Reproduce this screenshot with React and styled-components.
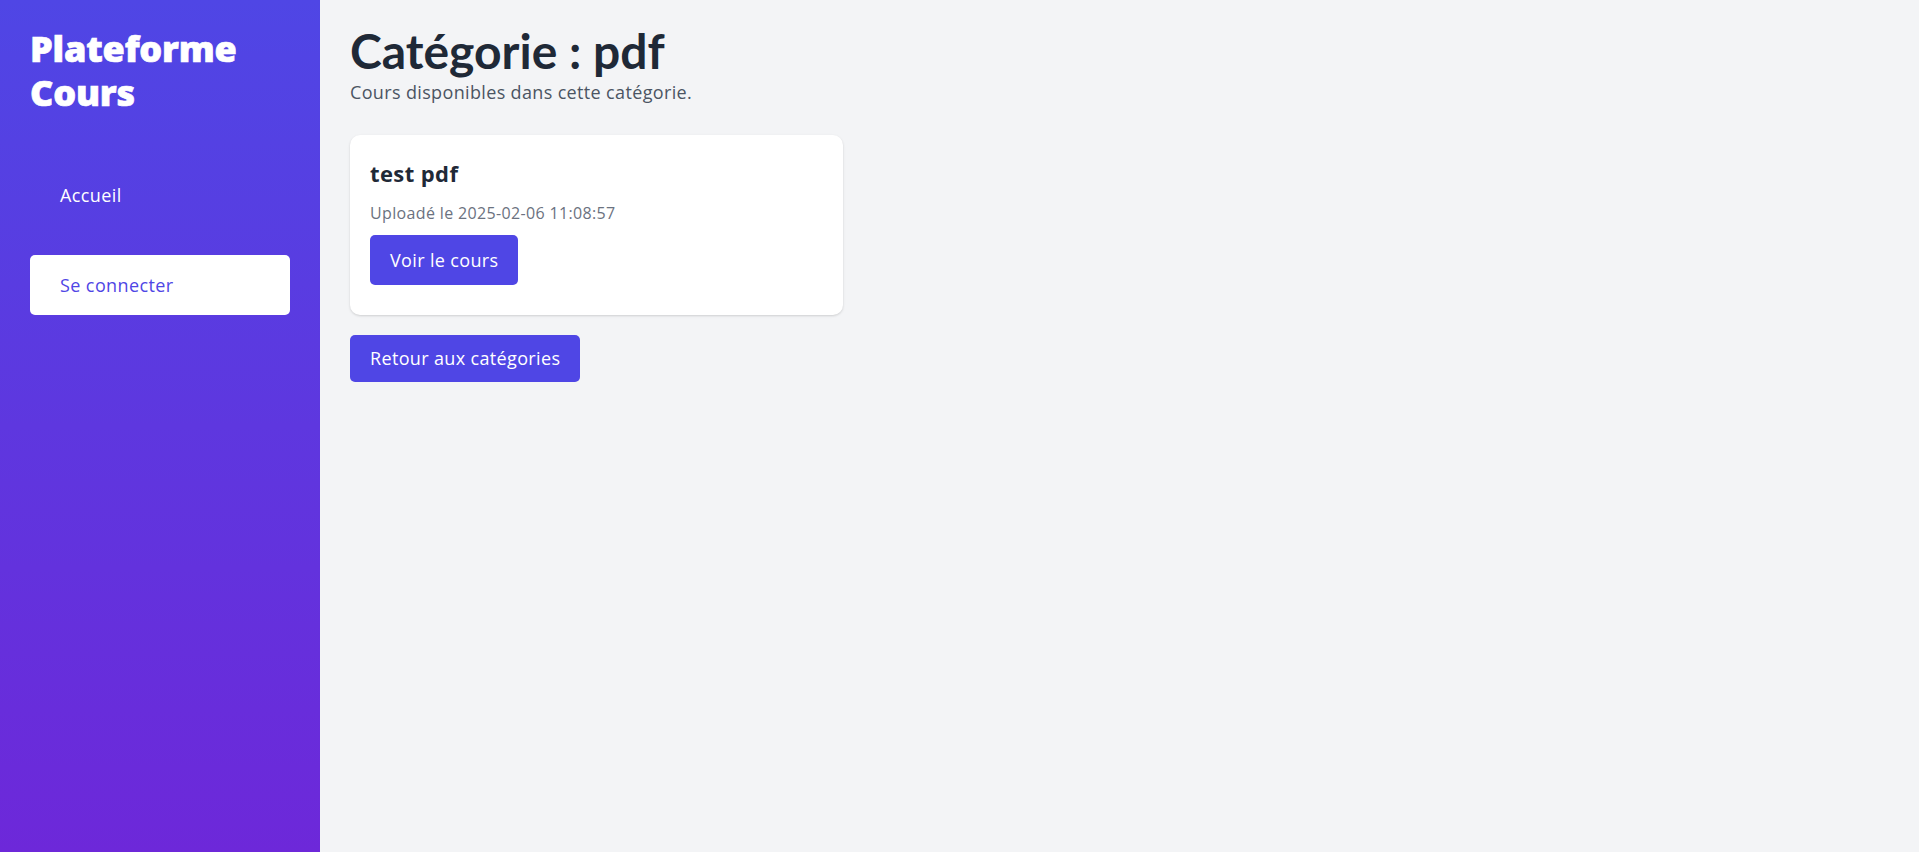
import React from "react";
import styled, { createGlobalStyle } from "styled-components";

const GlobalStyle = createGlobalStyle`
  * { box-sizing: border-box; }
  html, body { margin: 0; padding: 0; }
  body {
    font-family: "Open Sans", "Noto Sans", "Liberation Sans", sans-serif;
    background: #f3f4f6;
    color: #1f2937;
  }
`;

const Layout = styled.div`
  display: flex;
  min-height: 100vh;
`;

const Sidebar = styled.aside`
  width: 320px;
  flex-shrink: 0;
  padding: 27px 30px 30px;
  background: linear-gradient(180deg, #4f46e5 0%, #6d28d9 100%);
  display: flex;
  flex-direction: column;
`;

const Brand = styled.h1`
  margin: 0;
  font-size: 36px;
  line-height: 44px;
  font-weight: 800;
  letter-spacing: -0.2px;
  -webkit-text-stroke: 0.7px #ffffff;
  color: #ffffff;
`;

const Nav = styled.nav`
  margin-top: 50px;
  display: flex;
  flex-direction: column;
  gap: 30px;
`;

const NavLink = styled.a`
  display: block;
  padding: 16px 30px;
  font-size: 18px;
  line-height: 28px;
  letter-spacing: 0.4px;
  text-decoration: none;
  border-radius: 5px;
  color: ${(p) => (p.$active ? "#4f46e5" : "#ffffff")};
  background: ${(p) => (p.$active ? "#ffffff" : "transparent")};
`;

const Main = styled.main`
  flex: 1;
  padding: 27px 30px 30px;
`;

const Title = styled.h2`
  margin: 0;
  font-family: Lato, "Open Sans", sans-serif;
  font-size: 48px;
  line-height: 48px;
  font-weight: 700;
  color: #1f2937;
`;

const Subtitle = styled.p`
  margin: 4px 0 0;
  font-size: 18px;
  line-height: 27px;
  letter-spacing: 0.35px;
  color: #4b5563;
`;

const Grid = styled.div`
  margin-top: 29px;
  display: grid;
  grid-template-columns: repeat(3, 1fr);
  gap: 30px;
`;

const Card = styled.div`
  background: #ffffff;
  border-radius: 10px;
  padding: 20px 20px 30px;
  box-shadow: 0 1px 3px rgba(0, 0, 0, 0.1), 0 1px 2px rgba(0, 0, 0, 0.06);
`;

const CardTitle = styled.h3`
  margin: 5px 0 0;
  font-size: 22px;
  line-height: 26px;
  font-weight: 700;
  letter-spacing: 0.4px;
  color: #1f2937;
`;

const Meta = styled.p`
  margin: 15px 0 0;
  font-size: 16px;
  line-height: 24px;
  letter-spacing: 0.35px;
  color: #6b7280;
`;

const Button = styled.a`
  display: inline-block;
  margin-top: ${(p) => p.$mt || "0"};
  padding: ${(p) => p.$pad || "12px 20px"};
  font-size: 18px;
  line-height: 26px;
  letter-spacing: 0.35px;
  color: #ffffff;
  background: #4f46e5;
  border-radius: 5px;
  text-decoration: none;
`;

const Footer = styled.div`
  margin-top: 20px;
`;

export default function App() {
  return (
    <>
      <GlobalStyle />
      <Layout>
        <Sidebar>
          <Brand>
            Plateforme
            <br />
            Cours
          </Brand>
          <Nav>
            <NavLink href="#">Accueil</NavLink>
            <NavLink href="#" $active>
              Se connecter
            </NavLink>
          </Nav>
        </Sidebar>
        <Main>
          <Title>Catégorie : pdf</Title>
          <Subtitle>Cours disponibles dans cette catégorie.</Subtitle>
          <Grid>
            <Card>
              <CardTitle>test pdf</CardTitle>
              <Meta>Uploadé le 2025-02-06 11:08:57</Meta>
              <Button href="#" $mt="10px">
                Voir le cours
              </Button>
            </Card>
          </Grid>
          <Footer>
            <Button href="#" $pad="10px 20px 11px">
              Retour aux catégories
            </Button>
          </Footer>
        </Main>
      </Layout>
    </>
  );
}
